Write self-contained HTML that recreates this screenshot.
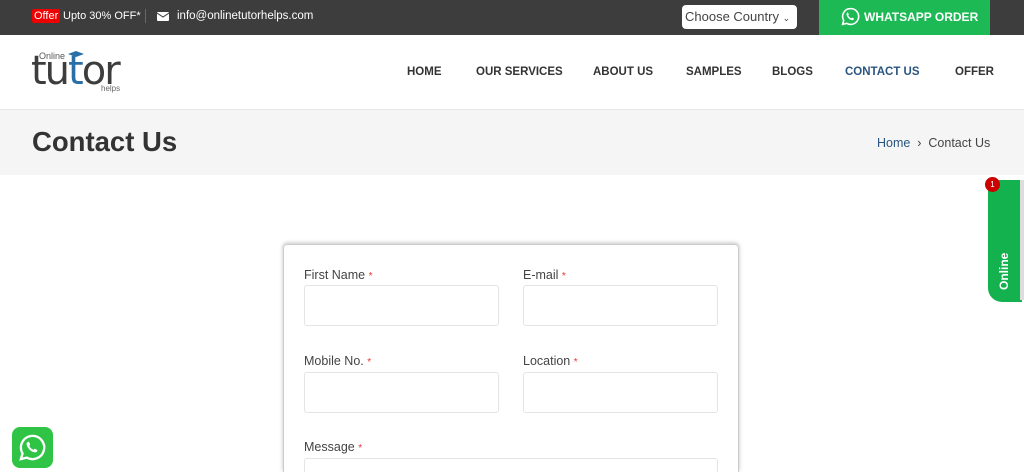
<!DOCTYPE html>
<html><head><meta charset="utf-8"><style>
*{box-sizing:border-box;margin:0;padding:0}
html,body{width:1024px;height:472px;overflow:hidden}
body{background:#fff;font-family:"Liberation Sans",sans-serif;position:relative;color:#333}
.top{position:absolute;left:0;top:0;width:1024px;height:35px;background:#3d3d3e}
.abs{position:absolute}
.nav a{position:absolute;top:66px;font-size:11.5px;font-weight:bold;color:#333;text-decoration:none}
.lbl{position:absolute;font-size:12.5px;color:#444}
.lbl b{color:#e33;font-weight:normal;font-size:10px}
.inp{position:absolute;width:195px;height:41px;border:1px solid #e4e4e4;border-radius:3px}
</style></head><body>
<div class="top"></div>
<div class="abs" style="left:32px;top:9px;background:#e00;color:#fff;font-size:11px;padding:1px 2px;border-radius:2px">Offer</div>
<div class="abs" style="left:63px;top:10px;color:#fff;font-size:11px">Upto 30% OFF*</div>
<div class="abs" style="left:145px;top:9px;width:1px;height:14px;background:#666"></div>
<svg class="abs" style="left:157px;top:12px" width="12" height="9"><rect width="12" height="9" rx="1" fill="#fff"/><path d="M0 1l6 4 6-4" stroke="#3d3d3e" fill="none"/></svg>
<div class="abs" style="left:177px;top:10px;color:#fff;font-size:11.5px">info@onlinetutorhelps.com</div>
<div class="abs" style="left:682px;top:5px;width:115px;height:24px;background:#fff;border-radius:4px;font-size:13px;color:#444;padding:4px 3px">Choose Country <span style="font-size:9px">⌄</span></div>
<div class="abs" style="left:819px;top:0;width:171px;height:35px;background:#1db954"></div>
<svg class="abs" style="left:841px;top:7px" width="19" height="19" viewBox="0 0 24 24"><path d="M12 2a10 10 0 0 0-8.6 15L2 22l5.2-1.4A10 10 0 1 0 12 2z" fill="none" stroke="#fff" stroke-width="2"/><path d="M8.5 7c.5 0 1 1.5 1.3 2.3.2.5-.7 1.2-.6 1.5.7 1.6 2 2.8 3.6 3.4.3.1 1-.9 1.3-.8.8.3 2.3 1 2.3 1.4 0 1-1 2-2.3 1.9C11 16.4 7.6 13 7 9.6 6.8 8.2 7.6 7 8.5 7z" fill="#fff"/></svg>
<div class="abs" style="left:864px;top:10px;color:#fff;font-size:12px;font-weight:bold">WHATSAPP ORDER</div>
<div class="abs" style="left:39px;top:51px;font-size:9px;color:#555">Online</div>
<div class="abs" style="left:31px;top:48px;font-size:40px;font-family:'DejaVu Sans',sans-serif;color:#3d3d3e;letter-spacing:-2px">tu<span style="color:#2a6fa8">t</span>or</div>
<svg class="abs" style="left:68px;top:51px" width="16" height="8"><path d="M0 3L8 0 16 3 8 6z" fill="#2a6fa8"/></svg>
<div class="abs" style="left:101px;top:84px;font-size:8px;color:#666">helps</div>
<div class="nav"><a style="left:407px">HOME</a><a style="left:476px">OUR SERVICES</a><a style="left:593px">ABOUT US</a><a style="left:686px">SAMPLES</a><a style="left:772px">BLOGS</a><a style="left:845px;color:#2a5580">CONTACT US</a><a style="left:955px">OFFER</a></div>
<div class="abs" style="left:0;top:109px;width:1024px;height:66px;background:#f5f5f5;border-top:1px solid #e8e8e8"></div>
<div class="abs" style="left:32px;top:126px;font-size:27.5px;font-weight:bold;color:#333">Contact Us</div>
<div class="abs" style="left:877px;top:136px;font-size:12.5px;color:#444"><span style="color:#2a5580">Home</span> &nbsp;›&nbsp; Contact Us</div>
<div class="abs" style="left:988px;top:180px;width:34px;height:122px;background:#13b24f;border-radius:0 0 0 14px"></div>
<div class="abs" style="left:985px;top:177px;width:15px;height:15px;border-radius:50%;background:#c00;color:#fff;font-size:8px;text-align:center;line-height:15px">1</div>
<div class="abs" style="transform:rotate(-90deg);transform-origin:left top;color:#fff;font-size:12px;font-weight:bold;top:290px;left:997px">Online</div>
<div class="abs" style="left:1020px;top:180px;width:4px;height:120px;background:#ddd"></div>
<div class="abs" style="left:283px;top:244px;width:456px;height:228px;border:1px solid #ccc;border-bottom:none;border-radius:4px 4px 0 0;box-shadow:0 -1px 4px rgba(0,0,0,.25)"></div>
<div class="lbl" style="left:304px;top:268px">First Name <b>*</b></div>
<div class="lbl" style="left:523px;top:268px">E-mail <b>*</b></div>
<div class="inp" style="left:304px;top:285px"></div><div class="inp" style="left:523px;top:285px"></div>
<div class="lbl" style="left:304px;top:354px">Mobile No. <b>*</b></div>
<div class="lbl" style="left:523px;top:354px">Location <b>*</b></div>
<div class="inp" style="left:304px;top:372px"></div><div class="inp" style="left:523px;top:372px"></div>
<div class="lbl" style="left:304px;top:440px">Message <b>*</b></div>
<div class="inp" style="left:304px;top:458px;width:414px;height:14px;border-bottom:none;border-radius:3px 3px 0 0"></div>
<div class="abs" style="left:12px;top:427px;width:41px;height:41px;border-radius:8px;background:#2fc445"></div>
<svg class="abs" style="left:17px;top:432px" width="31" height="31" viewBox="0 0 24 24"><path d="M12 3a9 9 0 0 0-7.7 13.6L3 21l4.6-1.2A9 9 0 1 0 12 3z" fill="none" stroke="#fff" stroke-width="1.8"/><path d="M9 7.5c.4 0 .9 1.3 1.1 2 .2.4-.6 1-.5 1.3.6 1.4 1.7 2.4 3.1 2.9.3.1.9-.8 1.1-.7.7.3 2 .9 2 1.2 0 .9-.9 1.7-2 1.6-3-.4-5.9-3.3-6.4-6.2C7.2 8.5 8.2 7.5 9 7.5z" fill="#fff"/></svg>
</body></html>
